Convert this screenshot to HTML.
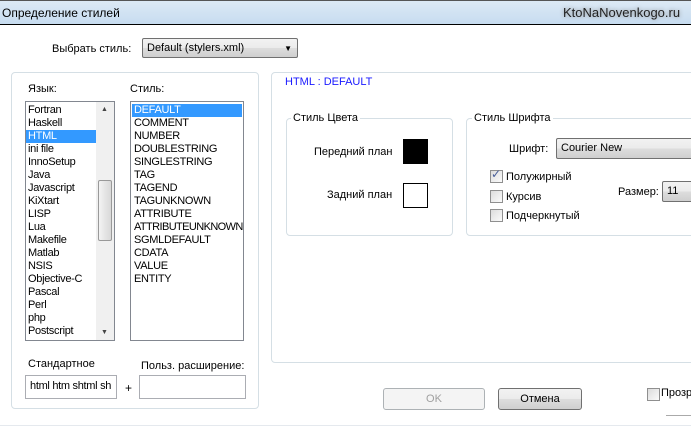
<!DOCTYPE html>
<html><head><meta charset="utf-8"><style>
*{margin:0;padding:0;box-sizing:border-box}
html,body{width:691px;height:427px;overflow:hidden}
body{background:#fff;font-family:"Liberation Sans","DejaVu Sans",sans-serif;font-size:11px;color:#000;position:relative}
#w{position:absolute;left:0;top:0;width:691px;height:427px;overflow:hidden}
.a{position:absolute;white-space:nowrap}
.tb{left:0;top:0;width:691px;height:25px;background:linear-gradient(#dce9f5,#c7dcf0);border-bottom:1px solid #000;border-top:1px solid #555}
.grp{position:absolute;border:1px solid #d5dfe5;border-radius:4px}
.list{position:absolute;border:1px solid #828790;background:#fff;overflow:hidden}
.it{height:13px;line-height:13px;padding-left:2px;letter-spacing:-0.3px}
.sel{background:#3399ff;color:#fff}
.combo{position:absolute;border:1px solid #707070;border-radius:2px;background:linear-gradient(#f2f2f2,#ebebeb 50%,#dddddd 51%,#cfcfcf);padding-left:4px;line-height:19px;overflow:hidden}
.cb{position:absolute;width:13px;height:13px;border:1px solid #8f8f8f;background:linear-gradient(135deg,#dcdcdc,#fbfbfb)}
.inp{position:absolute;border:1px solid #abadb3;background:#fff;padding-left:4px;line-height:21px;overflow:hidden;white-space:nowrap;letter-spacing:-0.3px}
.btn{position:absolute;border:1px solid #707070;border-radius:3px;background:linear-gradient(#f2f2f2,#ebebeb 50%,#dddddd 51%,#cfcfcf);text-align:center;line-height:20px}
</style></head><body><div id="w">
<div class="a tb"></div>
<div class="a" style="left:2px;top:6px;font-size:12px">Определение стилей</div>
<div class="a" style="left:563px;top:5px;font-size:13px;color:#222;text-shadow:0 0 4px #888">KtoNaNovenkogo.ru</div>

<div class="a" style="left:52px;top:43px">Выбрать стиль:</div>
<div class="combo" style="left:142px;top:38px;width:156px;height:20px">Default (stylers.xml)<span style="position:absolute;right:5px;top:0;font-size:8px">▼</span></div>

<div class="grp" style="left:11px;top:72px;width:248px;height:337px"></div>
<div class="a" style="left:28px;top:83px">Язык:</div>
<div class="a" style="left:130px;top:83px">Стиль:</div>
<div class="list" style="left:25px;top:101px;width:90px;height:240px;padding-top:2px">
<div class="it">Fortran</div><div class="it">Haskell</div><div class="it sel" style="width:70px">HTML</div><div class="it">ini file</div><div class="it">InnoSetup</div><div class="it">Java</div><div class="it">Javascript</div><div class="it">KiXtart</div><div class="it">LISP</div><div class="it">Lua</div><div class="it">Makefile</div><div class="it">Matlab</div><div class="it">NSIS</div><div class="it">Objective-C</div><div class="it">Pascal</div><div class="it">Perl</div><div class="it">php</div><div class="it">Postscript</div>
<div style="position:absolute;left:70px;top:0;width:18px;height:238px;background:#f0f0f0"></div>
<div style="position:absolute;left:72px;top:78px;width:14px;height:61px;border:1px solid #999;border-radius:2px;background:linear-gradient(90deg,#f3f3f3,#d8d8d8)"></div>
<div style="position:absolute;left:75px;top:4px;font-size:7px;color:#444">▲</div>
<div style="position:absolute;left:75px;top:227px;font-size:7px;color:#444">▼</div>
</div>
<div class="list" style="left:130px;top:101px;width:114px;height:240px;padding:2px 1px">
<div class="it sel">DEFAULT</div><div class="it">COMMENT</div><div class="it">NUMBER</div><div class="it">DOUBLESTRING</div><div class="it">SINGLESTRING</div><div class="it">TAG</div><div class="it">TAGEND</div><div class="it">TAGUNKNOWN</div><div class="it">ATTRIBUTE</div><div class="it" style="letter-spacing:-0.6px">ATTRIBUTEUNKNOWN</div><div class="it">SGMLDEFAULT</div><div class="it">CDATA</div><div class="it">VALUE</div><div class="it">ENTITY</div>
</div>
<div class="a" style="left:28px;top:358px">Стандартное</div>
<div class="a" style="left:141px;top:360px">Польз. расширение:</div>
<div class="inp" style="left:25px;top:375px;width:92px;height:24px">html htm shtml sh</div>
<div class="a" style="left:125px;top:381px;font-size:12px">+</div>
<div class="inp" style="left:139px;top:375px;width:107px;height:24px"></div>

<div class="grp" style="left:271px;top:72px;width:440px;height:291px"></div>
<div class="a" style="left:285px;top:76px;color:#1a1aff">HTML : DEFAULT</div>

<div class="grp" style="left:286px;top:118px;width:167px;height:118px"></div>
<div class="a" style="left:291px;top:112px;background:#fff;padding:0 2px">Стиль Цвета</div>
<div class="a" style="left:314px;top:146px">Передний план</div>
<div class="a" style="left:403px;top:139px;width:25px;height:25px;background:#000"></div>
<div class="a" style="left:327px;top:189px">Задний план</div>
<div class="a" style="left:403px;top:183px;width:25px;height:25px;border:1px solid #000"></div>

<div class="grp" style="left:466px;top:118px;width:240px;height:118px"></div>
<div class="a" style="left:472px;top:112px;background:#fff;padding:0 2px">Стиль Шрифта</div>
<div class="a" style="left:509px;top:143px">Шрифт:</div>
<div class="combo" style="left:556px;top:138px;width:150px;height:21px">Courier New</div>
<div class="cb" style="left:490px;top:170px"></div><div class="a" style="left:491px;top:167px;color:#4a5f9a;font-size:12px">✓</div>
<div class="a" style="left:506px;top:171px">Полужирный</div>
<div class="cb" style="left:490px;top:190px"></div><div class="a" style="left:506px;top:191px">Курсив</div>
<div class="cb" style="left:490px;top:209px"></div><div class="a" style="left:506px;top:210px">Подчеркнутый</div>
<div class="a" style="left:618px;top:186px">Размер:</div>
<div class="combo" style="left:662px;top:181px;width:40px;height:21px">11</div>

<div class="btn" style="left:383px;top:388px;width:102px;height:22px;border-color:#adb2b5;background:#f4f4f4;color:#a0a0a0">OK</div>
<div class="btn" style="left:498px;top:388px;width:84px;height:22px">Отмена</div>
<div class="cb" style="left:647px;top:388px"></div>
<div class="a" style="left:661px;top:387px;width:30px;overflow:hidden">Прозрачность</div>
<div class="a" style="left:666px;top:415px;width:25px;height:1px;background:#aaa"></div>
<div class="a" style="left:0;top:425px;width:691px;height:1px;background:#e5e9ee"></div>
</div></body></html>
